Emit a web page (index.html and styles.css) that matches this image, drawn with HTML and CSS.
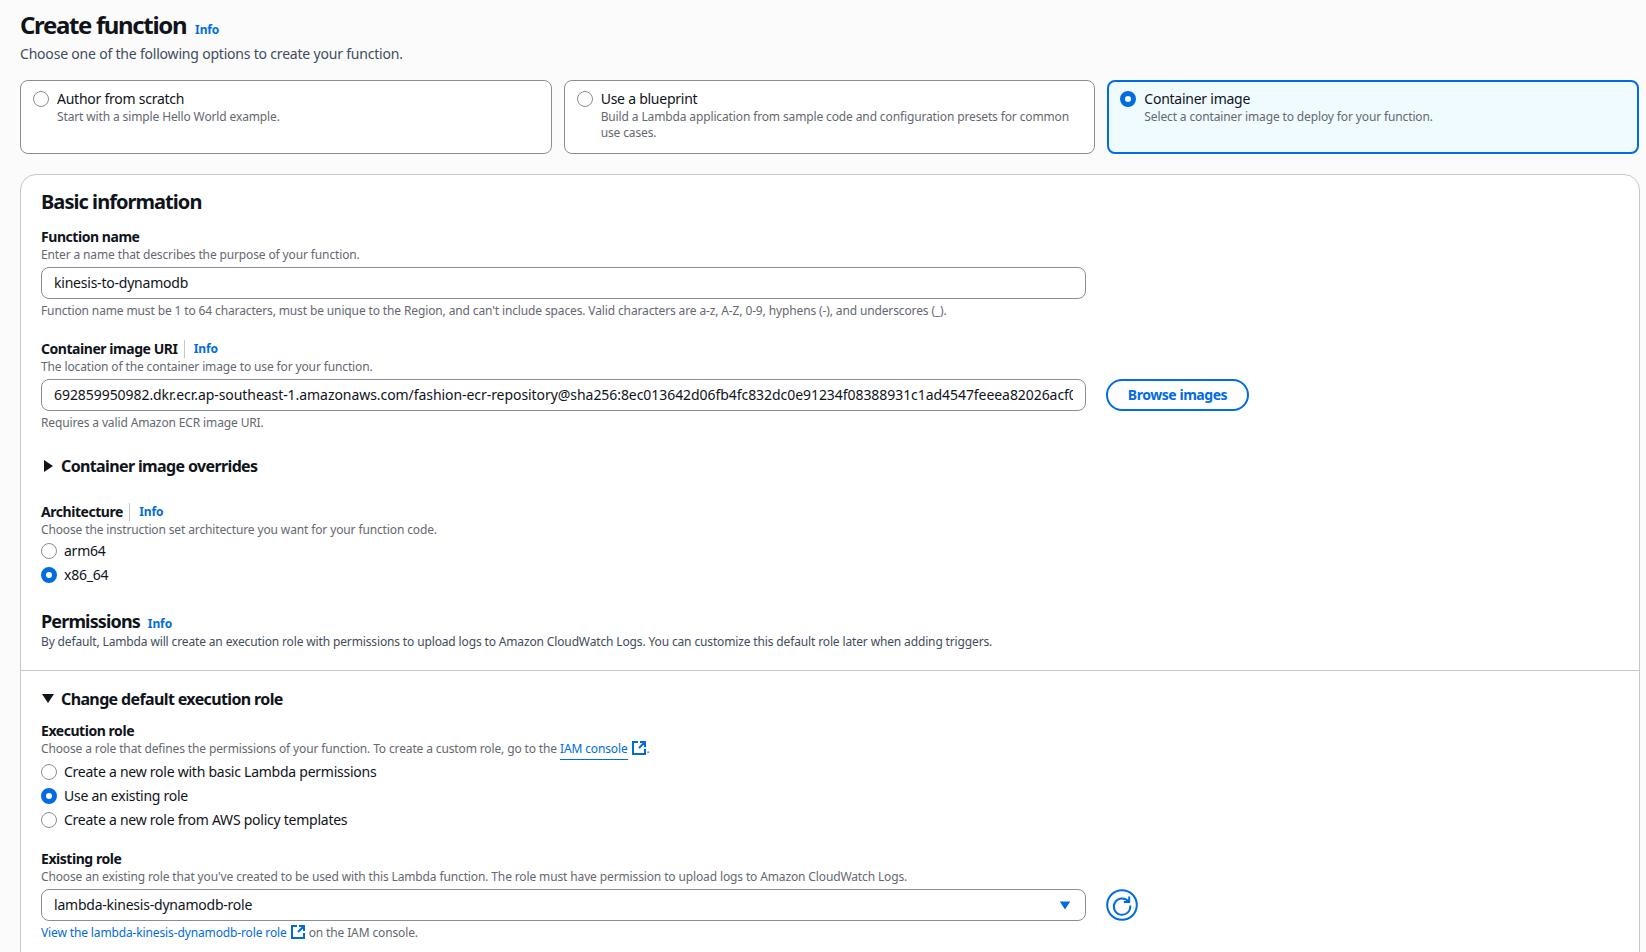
FILE: index.html
```html
<!DOCTYPE html>
<html lang="en">
<head>
<meta charset="utf-8">
<title>Create function</title>
<link rel="stylesheet" href="styles.css">
</head>
<body>
<main class="page">
  <header class="page-head">
    <h1 class="title">Create function <a class="info info-title">Info</a></h1>
    <p class="subtitle">Choose one of the following options to create your function.</p>
  </header>

  <section class="tiles">
    <div class="tile">
      <span class="radio"></span>
      <div><div class="tile-name">Author from scratch</div><div class="tile-desc">Start with a simple Hello World example.</div></div>
    </div>
    <div class="tile">
      <span class="radio"></span>
      <div><div class="tile-name">Use a blueprint</div><div class="tile-desc">Build a Lambda application from sample code and configuration presets for common use cases.</div></div>
    </div>
    <div class="tile tile-on">
      <span class="radio radio-on"></span>
      <div><div class="tile-name">Container image</div><div class="tile-desc">Select a container image to deploy for your function.</div></div>
    </div>
  </section>

  <section class="panel">
    <div class="panel-top">
      <h2 class="panel-title">Basic information</h2>

      <div class="field field-name">
        <div class="label">Function name</div>
        <div class="desc">Enter a name that describes the purpose of your function.</div>
        <div class="input-row"><div class="input">kinesis-to-dynamodb</div></div>
        <div class="desc hint">Function name must be 1 to 64 characters, must be unique to the Region, and can't include spaces. Valid characters are a-z, A-Z, 0-9, hyphens (-), and underscores (_).</div>
      </div>

      <div class="field field-uri">
        <div class="label">Container image URI <span class="sep"></span><a class="info">Info</a></div>
        <div class="desc">The location of the container image to use for your function.</div>
        <div class="input-row">
          <div class="input input-uri"><span class="clip">692859950982.dkr.ecr.ap-southeast-1.amazonaws.com/fashion-ecr-repository@sha256:8ec013642d06fb4fc832dc0e91234f08388931c1ad4547feeea82026acf0</span></div>
          <div class="btn">Browse images</div>
        </div>
        <div class="desc hint">Requires a valid Amazon ECR image URI.</div>
      </div>

      <div class="expander expander-overrides">
        <svg class="caret" viewBox="0 0 16 16"><path d="M4 2l9 6-9 6z"/></svg>
        <span>Container image overrides</span>
      </div>

      <div class="field field-arch">
        <div class="label">Architecture <span class="sep"></span><a class="info">Info</a></div>
        <div class="desc">Choose the instruction set architecture you want for your function code.</div>
        <div class="radios">
          <div class="opt"><span class="radio"></span>arm64</div>
          <div class="opt"><span class="radio radio-on"></span>x86_64</div>
        </div>
      </div>

      <h2 class="perm-title">Permissions <a class="info">Info</a></h2>
      <div class="perm-text">By default, Lambda will create an execution role with permissions to upload logs to Amazon CloudWatch Logs. You can customize this default role later when adding triggers.</div>
    </div>

    <div class="panel-bottom">
      <div class="expander">
        <svg class="caret" viewBox="0 0 16 16"><path d="M2 3h12l-6 9z"/></svg>
        <span>Change default execution role</span>
      </div>

      <div class="field field-role">
        <div class="label">Execution role</div>
        <div class="desc">Choose a role that defines the permissions of your function. To create a custom role, go to the <a class="ext-link"><span class="under">IAM console</span> <svg class="ext" viewBox="0 0 16 16"><path d="M7 2H2v12h12V9M9 2h5v5M14 2L8 8"/></svg></a>.</div>
        <div class="radios radios-role">
          <div class="opt"><span class="radio"></span>Create a new role with basic Lambda permissions</div>
          <div class="opt"><span class="radio radio-on"></span>Use an existing role</div>
          <div class="opt"><span class="radio"></span>Create a new role from AWS policy templates</div>
        </div>
      </div>

      <div class="field field-existing">
        <div class="label">Existing role</div>
        <div class="desc">Choose an existing role that you've created to be used with this Lambda function. The role must have permission to upload logs to Amazon CloudWatch Logs.</div>
        <div class="input-row">
          <div class="input select">lambda-kinesis-dynamodb-role
            <svg class="select-caret" viewBox="0 0 16 16"><path d="M2 4h12l-6 9z"/></svg>
          </div>
          <div class="refresh">
            <svg viewBox="0 0 32 32"><circle cx="16" cy="16" r="14.8"/><path d="M22.5 12.5A8.2 8.2 0 1 0 24.2 16.5M23.2 7.6v5.4h-5.4"/></svg>
          </div>
        </div>
        <div class="desc hint"><a class="link">View the lambda-kinesis-dynamodb-role role <svg class="ext" viewBox="0 0 16 16"><path d="M7 2H2v12h12V9M9 2h5v5M14 2L8 8"/></svg></a> on the IAM console.</div>
      </div>
    </div>
  </section>
</main>
</body>
</html>
```
FILE: styles.css
```css
* { box-sizing: border-box; }
html, body { margin: 0; height: 952px; overflow: hidden; }
body {
  background: #fbfbfc;
  color: #0f141a;
  font-family: "Noto Sans", "Open Sans", sans-serif;
  font-size: 14px;
  line-height: 20px;
  letter-spacing: -0.25px;
}
.page { padding: 8px 6px 0 20px; }
.title { margin: 0; font-size: 24px; line-height: 34px; font-weight: 700; letter-spacing: -1.35px; }
.subtitle { margin: -3px 0 0; font-size: 14px; line-height: 20px; color: #414d5c; letter-spacing: -0.2px; }
.info { color: #006ce0; font-size: 12px; font-weight: 700; letter-spacing: -0.1px; }
.info-title { margin-left: 4px; }
.tiles { display: grid; grid-template-columns: repeat(3, 1fr); gap: 12px; margin: 16px 1px 0 0; }
.tile {
  height: 74px; display: flex; gap: 8px;
  padding: 8px 16px 0 12px;
  background: #fff; border: 1px solid #8c8c94; border-radius: 8px;
}
.tile-on { background: #f0fbff; border: 2px solid #006ce0; padding: 7px 15px 0 11px; }
.tile-name { line-height: 19px; }
.tile-desc { font-size: 12px; line-height: 16px; color: #656871; letter-spacing: -0.13px; margin-top: 1px; }
.radio {
  flex: none; width: 16px; height: 16px; margin-top: 2px;
  border: 1px solid #8c8c94; border-radius: 50%; background: #fff;
}
.radio-on { border: 5px solid #006ce0; }
.panel { margin-top: 20px; background: #fff; border: 1px solid #c6c6cd; border-radius: 16px; height: 900px; }
.panel-top { padding: 15px 20px 19px; border-bottom: 1px solid #c6c6cd; }
.panel-title { margin: 0; font-size: 20px; line-height: 24px; font-weight: 700; letter-spacing: -0.95px; }
.field-name { margin-top: 14px; }
.field-uri { margin-top: 20px; }
.field-arch { margin-top: 26px; }
.label { display: flex; align-items: center; font-weight: 700; font-size: 14px; line-height: 18px; white-space: pre; letter-spacing: -0.45px; }
.sep { width: 1px; height: 18px; background: #c6c6cd; margin: 0 9px 0 3px; }
.desc { font-size: 12px; line-height: 18px; color: #656871; letter-spacing: -0.13px; }
.hint { margin-top: 3px; }
.input-row { display: flex; align-items: center; gap: 20px; margin-top: 3px; }
.input {
  flex: none; width: 1045px; height: 32px; padding: 0 12px; position: relative;
  border: 1px solid #8c8c94; border-radius: 8px; background: #fff;
  line-height: 30px; white-space: nowrap; letter-spacing: -0.22px;
}
.input-uri { letter-spacing: -0.06px; }
.clip { display: block; overflow: hidden; }
.btn {
  height: 32px; width: 143px; text-align: center; line-height: 28px;
  border: 2px solid #006ce0; border-radius: 20px; color: #006ce0; font-weight: 700; letter-spacing: -0.45px;
}
.expander { display: flex; align-items: center; gap: 5px; margin-left: -1px; font-size: 16px; line-height: 22px; font-weight: 700; letter-spacing: -0.63px; }
.expander-overrides { margin-top: 23px; }
.caret { width: 16px; height: 16px; fill: #0f141a; }
.radios { display: flex; flex-direction: column; gap: 4px; margin-top: 2px; }
.radios-role { margin-top: 4px; }
.opt { display: flex; align-items: center; gap: 7px; height: 20px; }
.opt .radio { margin-top: 0; }
.perm-title { margin: 24px 0 0; font-size: 18px; line-height: 24px; font-weight: 700; letter-spacing: -0.85px; }
.perm-title .info { margin-left: 4px; }
.perm-text { font-size: 12px; line-height: 18px; color: #414d5c; margin-top: -3px; letter-spacing: -0.14px; }
.panel-bottom { padding: 17px 20px 0; }
.field-role { margin-top: 12px; }
.field-existing { margin-top: 20px; }
.link, .ext-link { color: #006ce0; }
.under { border-bottom: 1px solid #006ce0; padding-bottom: 2px; }
.ext { width: 16px; height: 16px; vertical-align: -3px; fill: none; stroke: #006ce0; stroke-width: 2; }
.select-caret { position: absolute; right: 13px; top: 8px; width: 14px; height: 14px; fill: #006ce0; }
.refresh { width: 32px; height: 32px; }
.refresh svg { display: block; width: 32px; height: 32px; fill: none; stroke: #006ce0; stroke-width: 2; }
```
